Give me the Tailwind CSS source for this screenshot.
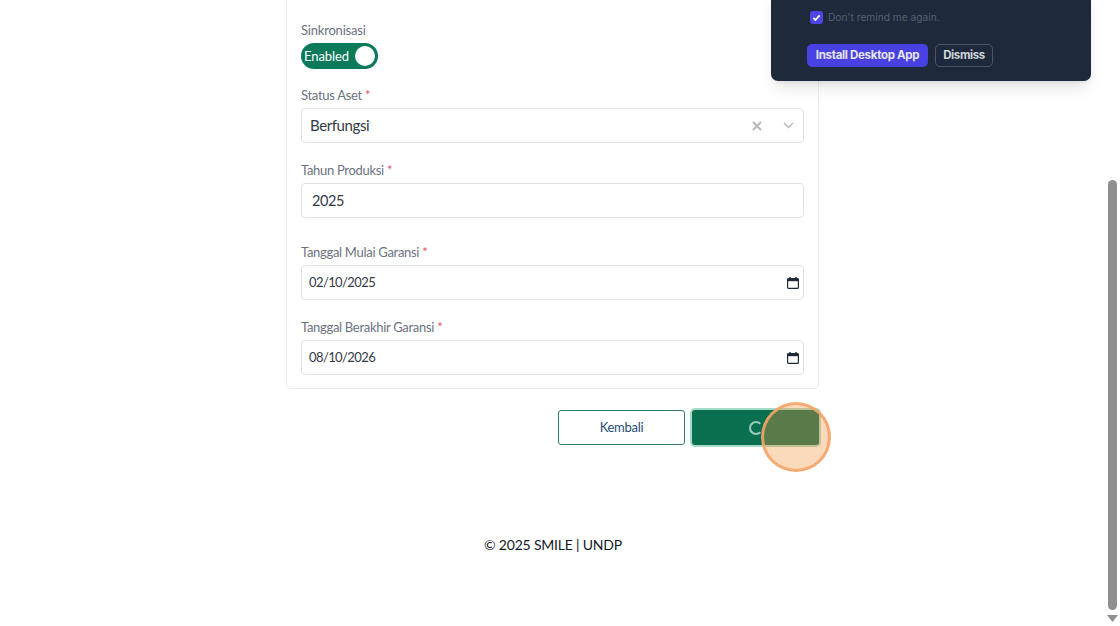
<!DOCTYPE html>
<html><head><meta charset="utf-8"><title>Aset</title>
<script src="https://cdn.jsdelivr.net/npm/@tailwindcss/browser@4"></script></head>
<body class="bg-white">
<div class="relative w-[1120px] h-[626px] overflow-hidden bg-white font-['Lato','Liberation_Sans',sans-serif]">
  <main class="w-[533px] ml-[286px] -mt-[10px]">
    <section class="h-[399px] border border-[#e9ebee] rounded-[5px] px-[14px] pt-[29px]">
      <div class="h-[20px] leading-[20px] text-[13px] tracking-[-0.2px] text-[#6b7280]">Sinkronisasi</div>
      <div class="mt-[3px] w-[77px] h-[26px] rounded-full bg-[#0b7a5b] flex items-center justify-between pl-[3px] pr-[3px]">
        <span class="text-[13px] tracking-[-0.1px] text-white pt-[1px]">Enabled</span>
        <span class="w-[20px] h-[20px] rounded-full bg-white"></span>
      </div>
      <div class="mt-[16px] h-[20px] leading-[20px] text-[13px] tracking-[-0.3px] text-[#6b7280]">Status Aset <span class="text-[#e0556a]">*</span></div>
      <div class="mt-[3px] w-[503px] h-[35px] border border-[#dfe2e6] rounded-[4px] flex items-center pl-[8px] pr-[9px] text-[15px] tracking-[-0.4px] text-[#333a45]">
        <span class="flex-1">Berfungsi</span>
        <svg class="w-[10px] h-[10px] mr-[21px]" viewBox="0 0 10 10" fill="none" stroke="#b5b7ba" stroke-width="2"><path d="M1 1l8 8M9 1l-8 8"/></svg>
        <svg class="w-[11px] h-[7px]" viewBox="0 0 11 7" fill="none" stroke="#b5b7ba" stroke-width="1.5"><path d="M1 1l4.5 4.5L10 1"/></svg>
      </div>
      <div class="mt-[17px] h-[20px] leading-[20px] text-[13px] tracking-[-0.3px] text-[#6b7280]">Tahun Produksi <span class="text-[#e0556a]">*</span></div>
      <div class="mt-[3px] w-[503px] h-[35px] border border-[#dfe2e6] rounded-[4px] flex items-center pl-[10px] text-[14.5px] tracking-[-0.4px] text-[#333a45]">2025</div>
      <div class="mt-[24px] h-[20px] leading-[20px] text-[13px] tracking-[-0.3px] text-[#6b7280]">Tanggal Mulai Garansi <span class="text-[#e0556a]">*</span></div>
      <div class="mt-[3px] w-[503px] h-[35px] border border-[#dfe2e6] rounded-[4px] flex items-center justify-between pl-[7px] pr-[4px] text-[13px] text-[#333a45]">
        <span class="tracking-[-0.6px]">02/10/2025</span>
        <svg class="w-[12px] h-[12px]" viewBox="0 0 12 12" fill="none"><path d="M3 0v2M9 0v2" stroke="#1f2937" stroke-width="1.4"/><rect x="0.6" y="1.6" width="10.8" height="9.8" rx="1" stroke="#1f2937" stroke-width="1.2"/><rect x="0.6" y="1.6" width="10.8" height="2.6" fill="#1f2937"/></svg>
      </div>
      <div class="mt-[17px] h-[20px] leading-[20px] text-[13px] tracking-[-0.3px] text-[#6b7280]">Tanggal Berakhir Garansi <span class="text-[#e0556a]">*</span></div>
      <div class="mt-[3px] w-[503px] h-[35px] border border-[#dfe2e6] rounded-[4px] flex items-center justify-between pl-[7px] pr-[4px] text-[13px] text-[#333a45]">
        <span class="tracking-[-0.6px]">08/10/2026</span>
        <svg class="w-[12px] h-[12px]" viewBox="0 0 12 12" fill="none"><path d="M3 0v2M9 0v2" stroke="#1f2937" stroke-width="1.4"/><rect x="0.6" y="1.6" width="10.8" height="9.8" rx="1" stroke="#1f2937" stroke-width="1.2"/><rect x="0.6" y="1.6" width="10.8" height="2.6" fill="#1f2937"/></svg>
      </div>
    </section>
    <div class="mt-[21px] flex justify-end gap-[7px]">
      <button class="w-[127px] h-[35px] border border-[#2f7f6b] rounded-[3px] bg-white text-[13px] tracking-[-0.3px] text-[#274c77]">Kembali</button>
      <button class="w-[127px] h-[35px] rounded-[3px] bg-[#0a6e50] ring-[2px] ring-[#a5dcc8] flex items-center justify-center">
        <span class="w-[14px] h-[14px] rounded-full border-[2px] border-[#9ccdbc] border-r-transparent"></span>
      </button>
    </div>
  </main>
  <footer class="mt-[90px] w-[1106px] text-center text-[14px] tracking-[-0.2px] leading-[20px] text-[#111827]">© 2025 SMILE | UNDP</footer>

  <div class="absolute left-[761px] top-[402px] w-[70px] h-[70px] rounded-full bg-[#f4913c]/35 border-[3px] border-[#f4a568]/90"></div>

  <aside class="absolute left-[771px] -top-[10px] w-[320px] h-[91px] rounded-b-[7px] bg-[#1e293b] shadow-lg font-['Inter','Liberation_Sans',sans-serif]">
    <div class="absolute left-[39px] top-[20px] flex items-center gap-[5px]">
      <span class="w-[13px] h-[13px] rounded-[3px] bg-[#4f46e5] flex items-center justify-center">
        <svg class="w-[9px] h-[9px]" viewBox="0 0 10 10" fill="none" stroke="white" stroke-width="2"><path d="M1.5 5.5l2.3 2.2 4.7-5"/></svg>
      </span>
      <span class="text-[10.2px] text-[#566072]">Don't remind me again.</span>
    </div>
    <div class="absolute left-[36px] top-[54px] flex gap-[7px]">
      <button class="w-[121px] h-[23px] pt-[1px] rounded-[5px] bg-[#4840e0] text-[11.5px] font-bold text-[#e5e7eb] tracking-[-0.3px]">Install Desktop App</button>
      <button class="w-[58px] h-[23px] pt-[1px] rounded-[5px] border border-[#4b5563] text-[11.5px] font-bold text-[#d1d5db] tracking-[-0.4px]">Dismiss</button>
    </div>
  </aside>

  <div class="absolute left-[1108px] top-[180px] w-[9px] h-[430px] rounded-full bg-[#8f8f8f]"></div>
  <svg class="absolute left-[1107px] top-[615px] w-[11px] h-[7px]" viewBox="0 0 11 7"><path d="M0 0h11L5.5 7z" fill="#8f8f8f"/></svg>
</div>
</body></html>
